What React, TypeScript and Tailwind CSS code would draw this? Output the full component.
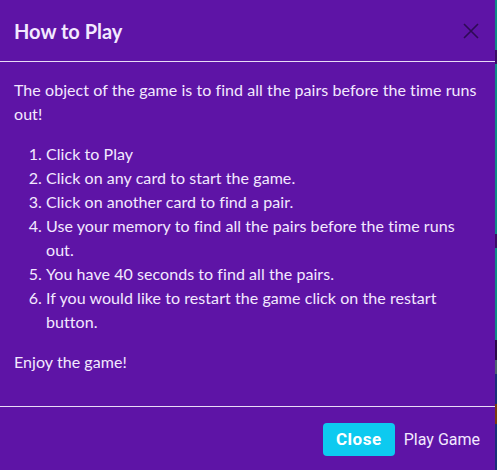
export default function App() {
  return (
    <div className="flex h-[470px] w-[497px] overflow-hidden bg-[#5e14a6]">
      {/* modal */}
      <div className="flex w-[495px] flex-col text-[#f3e9ff]" style={{ fontFamily: "Lato, 'Noto Sans', sans-serif" }}>
        <div className="flex h-[62px] items-center justify-between border-b border-[#e9dcf7] pl-[14px] pr-[15px]">
          <h5 className="text-[20px] font-bold leading-[30px]">How to Play</h5>
          <button className="flex h-6 w-[18px] items-center justify-center text-[#2e0b55]">
            <svg width="16" height="16" viewBox="0 0 16 16" fill="none" stroke="currentColor" strokeWidth="1.6">
              <path d="M1 1 L15 15 M15 1 L1 15" />
            </svg>
          </button>
        </div>

        <div className="pl-[14px] pr-3 py-4 text-[16px] leading-6 tracking-[0.06px]">
          <p className="mb-4">The object of the game is to find all the pairs before the time runs out!</p>
          <ol className="mb-4 list-decimal pl-8">
            <li>Click to Play</li>
            <li>Click on any card to start the game.</li>
            <li>Click on another card to find a pair.</li>
            <li>Use your memory to find all the pairs before the time runs out.</li>
            <li>You have 40 seconds to find all the pairs.</li>
            <li>If you would like to restart the game click on the restart button.</li>
          </ol>
          <p className="mb-4">Enjoy the game!</p>
        </div>

        <div className="flex items-center justify-end gap-[9px] border-t border-[#e9dcf7] pr-[15px] pt-4" style={{ fontFamily: "Roboto, sans-serif" }}>
          <button className="h-[33px] w-[72px] rounded bg-[#0dcaf0] text-[17px] font-bold tracking-[0.5px] text-white">
            Close
          </button>
          <button className="text-[16px] text-[#f3e9ff]">Play Game</button>
        </div>
      </div>

      {/* backdrop edge */}
      <div className="flex w-[2px] flex-col">
        <div className="h-[50px] bg-[#0f8a88]" />
        <div className="h-[14px] bg-[#3a0f66]" />
        <div className="h-[170px] bg-[#0f8a88]" />
        <div className="h-[14px] bg-[#3a0f66]" />
        <div className="h-[92px] bg-[#0f8a88]" />
        <div className="h-[20px] bg-[#2b0a4a]" />
        <div className="h-[14px] bg-[#4a6070]" />
        <div className="h-[30px] bg-[#1a2e7a]" />
        <div className="h-[20px] bg-[#7a3a10]" />
        <div className="flex-1 bg-[#1a2e7a]" />
      </div>
    </div>
  );
}
